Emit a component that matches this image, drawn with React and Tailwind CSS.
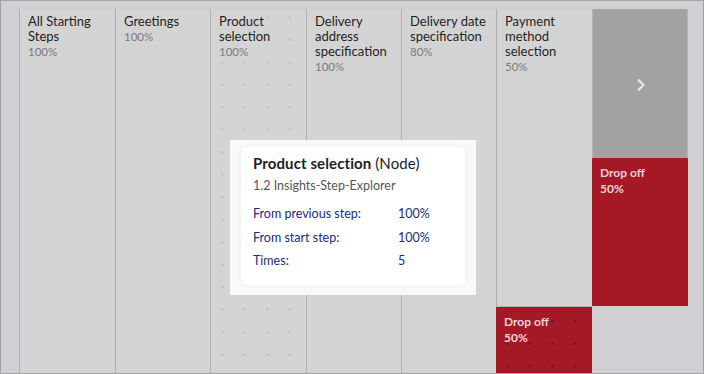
const COLUMNS = [
  { lines: ["All Starting", "Steps"], pct: "100%", w: "w-[96px]" },
  { lines: ["Greetings"], pct: "100%", w: "w-[95px]" },
  { lines: ["Product", "selection"], pct: "100%", w: "w-[96px]", dots: true },
  { lines: ["Delivery", "address", "specification"], pct: "100%", w: "w-[95px]" },
  { lines: ["Delivery date", "specification"], pct: "80%", w: "w-[95px]" },
];

const DOTS =
  "bg-[radial-gradient(circle,rgba(130,130,130,0.6)_0.7px,transparent_1.1px)] bg-[length:22.5px_22.5px]";

function StepHeader({ lines, pct }) {
  return (
    <div className="relative px-2 pt-[5px] text-[13px] leading-[15px] text-[#1f1f1f]">
      {lines.map((l) => (
        <div key={l}>{l}</div>
      ))}
      <div className="text-[11.5px] leading-[15px] text-[#7b7b7b]">{pct}</div>
    </div>
  );
}

function DropOff({ className = "", dots = false }) {
  return (
    <div className={`relative bg-[#a51826] ${className}`}>
      {dots && (
        <div className="absolute inset-0 bg-[radial-gradient(circle,rgba(25,25,90,0.85)_0.8px,transparent_1.2px)] bg-[length:22.5px_22.5px] bg-[position:0px_3px]" />
      )}
      <div className="relative px-2 pt-[7px] text-[12px] leading-[16px] font-bold text-[#f1d3da]">
        <div>Drop off</div>
        <div>50%</div>
      </div>
    </div>
  );
}

function Tooltip() {
  return (
    <div className="absolute left-[229px] top-[139px] w-[246px] h-[155px] bg-[#f9f9f9] px-[11px] py-[7px]">
      <div className="h-[138px] rounded-[5px] bg-white shadow-[0_0_6px_rgba(0,0,0,0.05)] px-3 pt-[6px]">
        <div className="text-[15px] leading-[20px] tracking-[0.1px] text-[#1d1d2a]">
          <span className="font-bold">Product selection</span> (Node)
        </div>
        <div className="mt-[5px] text-[12.5px] leading-[16px] text-[#555]">
          1.2 Insights-Step-Explorer
        </div>
        <div className="mt-[8px] text-[12.5px] leading-[23.5px] text-[#222b80]">
          {[
            ["From previous step:", "100%"],
            ["From start step:", "100%"],
            ["Times:", "5"],
          ].map(([k, v]) => (
            <div key={k} className="flex">
              <span className="w-[145px]">{k}</span>
              <span>{v}</span>
            </div>
          ))}
        </div>
      </div>
    </div>
  );
}

export default function App() {
  return (
    <div className="relative w-[704px] h-[374px] overflow-hidden border border-[#a4a4a4] bg-[#d0d0d5] pl-[18px] pt-[8px] font-['Lato',sans-serif]">
      <div className="flex h-full">
        {COLUMNS.map((c) => (
          <div
            key={c.lines.join(" ")}
            className={`relative ${c.w} h-full border-l border-[#b0b0b0] bg-[#d4d4d4]`}
          >
            {c.dots && (
              <div className={`absolute inset-0 ${DOTS} bg-[position:0px_-3px]`} />
            )}
            <StepHeader lines={c.lines} pct={c.pct} />
          </div>
        ))}

        {/* Payment method selection */}
        <div className="w-[96px] h-full flex flex-col">
          <div className="h-[298px] border-l border-b border-[#b0b0b0] bg-[#d4d4d4]">
            <StepHeader lines={["Payment", "method", "selection"]} pct="50%" />
          </div>
          <DropOff className="flex-1" dots />
        </div>

        {/* next page */}
        <div className="w-[96px] h-full flex flex-col">
          <div className="h-[149px] border-l border-r border-[#b3b3b3] bg-[#a2a2a2] flex items-center justify-center">
            <svg width="10" height="14" viewBox="0 0 10 14" className="ml-[2px] mt-[2px]">
              <polyline
                points="2,1.5 7.5,7 2,12.5"
                fill="none"
                stroke="#e6e6e6"
                strokeWidth="2.2"
              />
            </svg>
          </div>
          <DropOff className="h-[148px]" />
        </div>
      </div>
      <Tooltip />
    </div>
  );
}
